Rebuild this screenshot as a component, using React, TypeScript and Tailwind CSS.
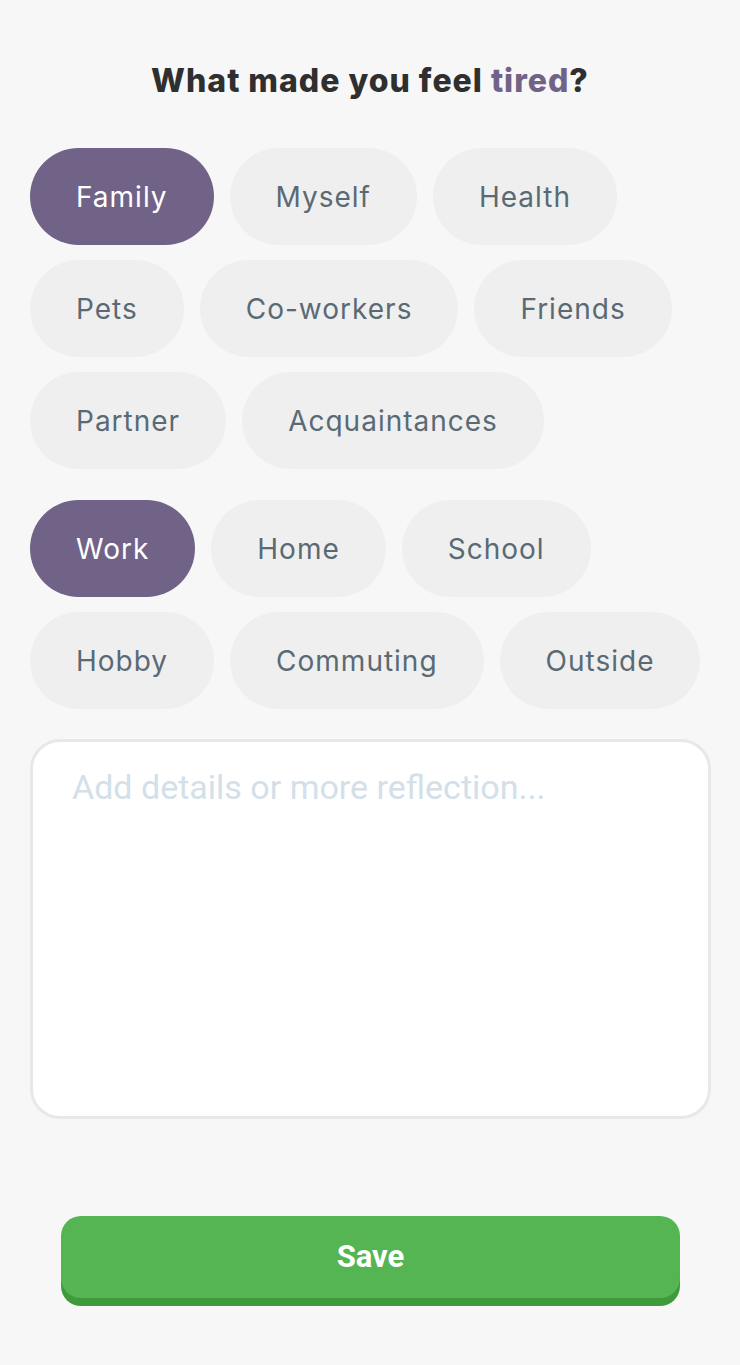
const whoTags = ["Family", "Myself", "Health", "Pets", "Co-workers", "Friends", "Partner", "Acquaintances"];
const whereTags = ["Work", "Home", "School", "Hobby", "Commuting", "Outside"];

const Chip = ({ label, active }: { label: string; active: boolean }) => (
  <button
    className={
      active
        ? "h-[97px] rounded-full px-[46px] bg-[#716387] text-white text-[28px] tracking-[1px]"
        : "h-[97px] rounded-full px-[46px] bg-[#efefef] text-[#5a6a74] text-[28px] tracking-[1px]"
    }
    style={{ fontFamily: "Inter, 'Noto Sans', sans-serif" }}
  >
    {label}
  </button>
);

export default function App() {
  return (
    <div className="min-h-[1365px] w-[740px] bg-[#f7f7f7] px-[30px] pt-[62px]">
      <h1
        className="text-center text-[32px] leading-[38px] font-extrabold tracking-[1px] text-[#2f2f2f] mb-[48px]"
        style={{ fontFamily: "Inter, 'Noto Sans', sans-serif" }}
      >
        What made you feel <span className="text-[#716387]">tired</span>?
      </h1>

      <div className="flex flex-wrap gap-x-[16px] gap-y-[15px]">
        {whoTags.map((t) => (
          <Chip key={t} label={t} active={t === "Family"} />
        ))}
      </div>

      <div className="flex flex-wrap gap-x-[16px] gap-y-[15px] mt-[31px]">
        {whereTags.map((t) => (
          <Chip key={t} label={t} active={t === "Work"} />
        ))}
      </div>

      <textarea
        className="mt-[30px] block w-[681px] h-[380px] resize-none rounded-[30px] border-[3px] border-[#e8e8e8] bg-white pl-[39px] pt-[25px] text-[34px] leading-[40px] text-[#333] placeholder:text-[#d3e0e9] outline-none"
        style={{ fontFamily: "Roboto, sans-serif" }}
        placeholder="Add details or more reflection..."
      />

      <div className="mt-[97px] pl-[31px] pr-[30px]">
        <button
          className="w-full h-[82px] rounded-[20px] bg-[#54b552] shadow-[0_8px_0_#3f9a3c] text-white text-[31px] font-bold"
          style={{ fontFamily: "Roboto, sans-serif" }}
        >
          Save
        </button>
      </div>
    </div>
  );
}
